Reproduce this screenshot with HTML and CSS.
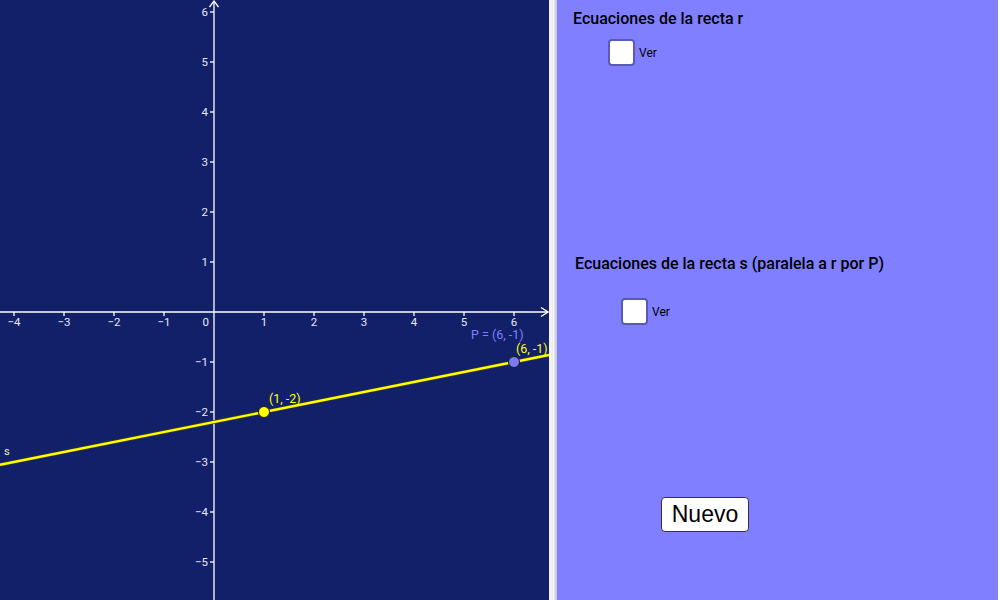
FILE: index.html
```html
<!DOCTYPE html>
<html lang="es">
<head>
<meta charset="utf-8">
<title>Recta paralela</title>
<link rel="stylesheet" href="styles.css">
</head>
<body>
<div class="app">
  <div class="graph">
    <svg width="549" height="600" viewBox="0 0 549 600" xmlns="http://www.w3.org/2000/svg">
      <rect width="549" height="600" fill="#12206a"/>
      <g stroke="#ffffff" stroke-width="1.3" fill="none">
        <line x1="0" y1="312" x2="548" y2="312"/>
        <polyline points="541,307.5 548,312 541,316.5"/>
        <line x1="214" y1="600" x2="214" y2="1"/>
        <polyline points="209.5,7 214,1 218.5,7"/>
        <line x1="14" y1="312" x2="14" y2="316"/>
        <line x1="64" y1="312" x2="64" y2="316"/>
        <line x1="114" y1="312" x2="114" y2="316"/>
        <line x1="164" y1="312" x2="164" y2="316"/>
        <line x1="264" y1="312" x2="264" y2="316"/>
        <line x1="314" y1="312" x2="314" y2="316"/>
        <line x1="364" y1="312" x2="364" y2="316"/>
        <line x1="414" y1="312" x2="414" y2="316"/>
        <line x1="464" y1="312" x2="464" y2="316"/>
        <line x1="514" y1="312" x2="514" y2="316"/>
        <line x1="210" y1="12" x2="214" y2="12"/>
        <line x1="210" y1="62" x2="214" y2="62"/>
        <line x1="210" y1="112" x2="214" y2="112"/>
        <line x1="210" y1="162" x2="214" y2="162"/>
        <line x1="210" y1="212" x2="214" y2="212"/>
        <line x1="210" y1="262" x2="214" y2="262"/>
        <line x1="210" y1="362" x2="214" y2="362"/>
        <line x1="210" y1="412" x2="214" y2="412"/>
        <line x1="210" y1="462" x2="214" y2="462"/>
        <line x1="210" y1="512" x2="214" y2="512"/>
        <line x1="210" y1="562" x2="214" y2="562"/>
      </g>
      <g class="tick" text-anchor="middle">
        <text x="14" y="326">−4</text>
        <text x="64" y="326">−3</text>
        <text x="114" y="326">−2</text>
        <text x="164" y="326">−1</text>
        <text x="264" y="326">1</text>
        <text x="314" y="326">2</text>
        <text x="364" y="326">3</text>
        <text x="414" y="326">4</text>
        <text x="464" y="326">5</text>
        <text x="514" y="326">6</text>
      </g>
      <g class="tick" text-anchor="end">
        <text x="209" y="326">0</text>
        <text x="208" y="16">6</text>
        <text x="208" y="66">5</text>
        <text x="208" y="116">4</text>
        <text x="208" y="166">3</text>
        <text x="208" y="216">2</text>
        <text x="208" y="266">1</text>
        <text x="208" y="366">−1</text>
        <text x="208" y="416">−2</text>
        <text x="208" y="466">−3</text>
        <text x="208" y="516">−4</text>
        <text x="208" y="566">−5</text>
      </g>
      <line x1="0" y1="464.8" x2="549" y2="355" stroke="#4a4a18" stroke-width="3.6"/>
      <line x1="0" y1="464.8" x2="549" y2="355" stroke="#ffff00" stroke-width="2.4"/>
      <text class="lbl-s" x="4" y="455">s</text>
      <circle cx="264" cy="412" r="5.5" fill="#ffff00" stroke="#1a1a1a" stroke-width="1"/>
      <circle cx="514" cy="362" r="5.5" fill="#7b7bef" stroke="#1a1a1a" stroke-width="1"/>
      <text class="lbl-y" x="269" y="403">(1, -2)</text>
      <text class="lbl-p" x="471" y="339">P = (6, -1)</text>
      <text class="lbl-y" x="516" y="353">(6, -1)</text>
    </svg>
  </div>
  <div class="sep"></div>
  <div class="panel">
    <h2 class="title">Ecuaciones de la recta r</h2>
    <label class="check check-r"><span class="box"></span><span class="ver">Ver</span></label>
    <h2 class="title title-s">Ecuaciones de la recta s (paralela a r por P)</h2>
    <label class="check check-s"><span class="box"></span><span class="ver">Ver</span></label>
    <button class="nuevo">Nuevo</button>
  </div>
  <div class="edge"></div>
</div>
</body>
</html>
```

FILE: styles.css
```css
html, body {
  margin: 0;
  padding: 0;
  background: #ffffff;
}
.app {
  display: flex;
  width: 1000px;
  height: 600px;
  overflow: hidden;
}
.graph {
  width: 549px;
  height: 600px;
  flex: none;
}
.graph svg {
  display: block;
}
.tick {
  font-family: Roboto, "Liberation Sans", sans-serif;
  font-size: 11.5px;
  fill: #e8e8f4;
}
.lbl-y {
  font-family: Roboto, "Liberation Sans", sans-serif;
  font-size: 12.5px;
  fill: #ffff00;
}
.lbl-p {
  font-family: Roboto, "Liberation Sans", sans-serif;
  font-size: 12.5px;
  fill: #8080ff;
}
.lbl-s {
  font-family: Roboto, "Liberation Sans", sans-serif;
  font-size: 11px;
  fill: #f0f0b8;
}
.sep {
  width: 8px;
  flex: none;
  background: linear-gradient(to right, #f4f4fa 0, #f0f0f6 5px, #d4d4dc 6px, #c8c8d0 8px);
}
.panel {
  flex: none;
  width: 441px;
  height: 600px;
  background: #7f7fff;
  padding-left: 16px;
  box-sizing: border-box;
  display: flex;
  flex-direction: column;
  align-items: flex-start;
}
.edge {
  flex: 1;
  background: #ffffff;
}
.title {
  margin: 9px 0 0 0;
  font-family: Roboto, "Liberation Sans", sans-serif;
  font-size: 16px;
  font-weight: 500;
  line-height: 20px;
  color: #000000;
}
.title-s {
  margin-top: 188px;
  margin-left: 2px;
}
.check {
  display: flex;
  align-items: center;
  gap: 4px;
}
.check-r {
  margin: 10px 0 0 35px;
}
.check-s {
  margin: 24px 0 0 48px;
}
.box {
  width: 23px;
  height: 23px;
  background: #ffffff;
  border: 2px solid #5a5ab4;
  border-radius: 4px;
}
.ver {
  font-family: Roboto, "Liberation Sans", sans-serif;
  font-size: 12px;
  color: #000000;
}
.nuevo {
  margin: 172px 0 0 88px;
  width: 88px;
  height: 35px;
  padding: 0;
  background: #ffffff;
  border: 1px solid #333344;
  border-radius: 4px;
  font-family: "Liberation Sans", Arial, sans-serif;
  font-size: 23px;
  color: #000000;
  line-height: 33px;
}
```
